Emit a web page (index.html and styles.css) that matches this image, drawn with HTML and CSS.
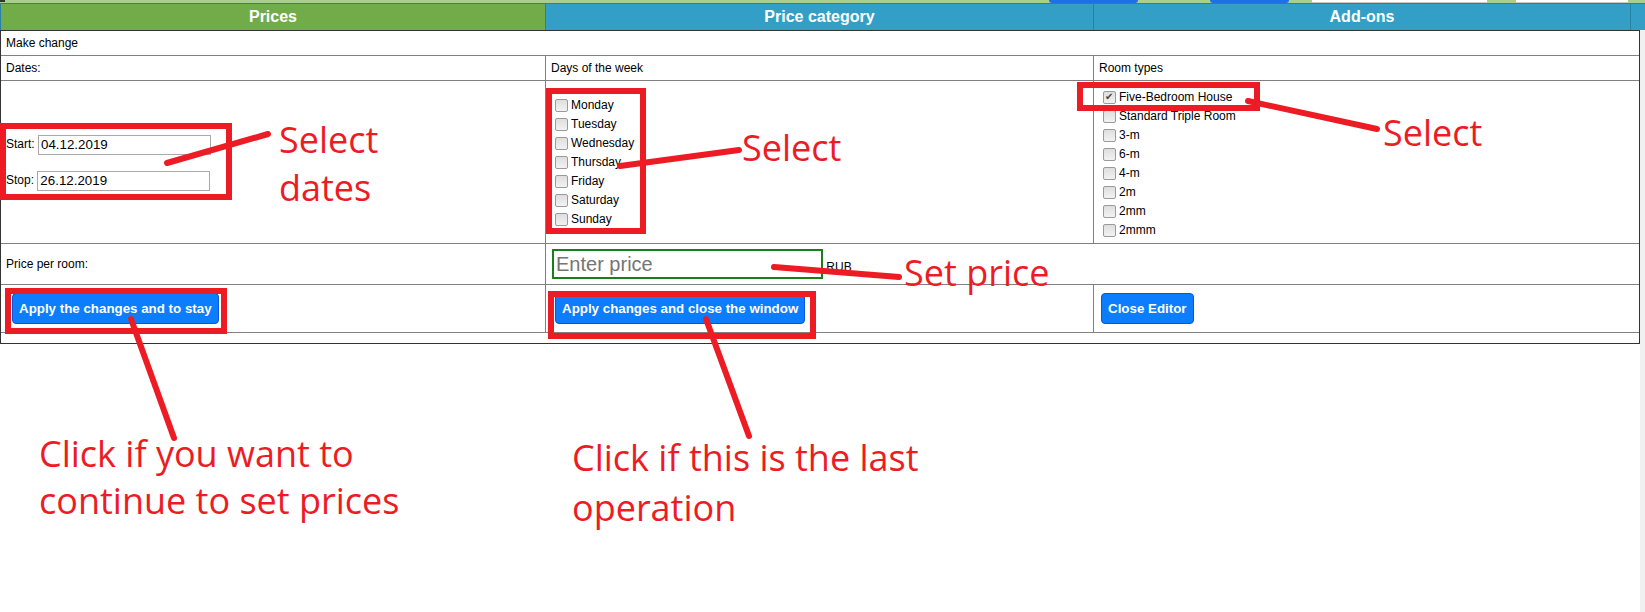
FILE: index.html
```html
<!DOCTYPE html>
<html lang="en">
<head>
<meta charset="utf-8">
<title>Price editor</title>
<link rel="stylesheet" href="styles.css">
</head>
<body>
<div class="page">
  <div class="topbar">
    <span class="tb-mark"></span>
    <span class="tb-btn tb-btn1"></span>
    <span class="tb-btn tb-btn2"></span>
    <span class="tb-field tb-field1"></span>
    <span class="tb-field tb-field2"></span>
  </div>
  <div class="tabs">
    <div class="tab tab-green">Prices</div>
    <div class="tab">Price category</div>
    <div class="tab">Add-ons</div>
    <div class="tab tab-end"></div>
  </div>
  <div class="body-row">
    <table class="editor">
      <colgroup><col class="c1"><col class="c2"><col class="c3"></colgroup>
      <tr class="r-head"><td colspan="3">Make change</td></tr>
      <tr class="r-label"><td>Dates:</td><td>Days of the week</td><td>Room types</td></tr>
      <tr class="r-main">
        <td>
          <div class="dates">
            <label class="date-row">Start: <input class="date" type="text" value="04.12.2019"></label>
            <label class="date-row">Stop: <input class="date" type="text" value="26.12.2019"></label>
          </div>
        </td>
        <td>
          <ul class="checks">
            <li><label><input class="cb" type="checkbox">Monday</label></li>
            <li><label><input class="cb" type="checkbox">Tuesday</label></li>
            <li><label><input class="cb" type="checkbox">Wednesday</label></li>
            <li><label><input class="cb" type="checkbox">Thursday</label></li>
            <li><label><input class="cb" type="checkbox">Friday</label></li>
            <li><label><input class="cb" type="checkbox">Saturday</label></li>
            <li><label><input class="cb" type="checkbox">Sunday</label></li>
          </ul>
        </td>
        <td>
          <ul class="checks checks-rooms">
            <li><label><input class="cb" type="checkbox" checked>Five-Bedroom House</label></li>
            <li><label><input class="cb" type="checkbox">Standard Triple Room</label></li>
            <li><label><input class="cb" type="checkbox">3-m</label></li>
            <li><label><input class="cb" type="checkbox">6-m</label></li>
            <li><label><input class="cb" type="checkbox">4-m</label></li>
            <li><label><input class="cb" type="checkbox">2m</label></li>
            <li><label><input class="cb" type="checkbox">2mm</label></li>
            <li><label><input class="cb" type="checkbox">2mmm</label></li>
          </ul>
        </td>
      </tr>
      <tr class="r-price">
        <td>Price per room:</td>
        <td colspan="2"><input class="price" type="text" placeholder="Enter price"> RUB</td>
      </tr>
      <tr class="r-actions">
        <td><button class="btn btn-stay">Apply the changes and to stay</button></td>
        <td><button class="btn btn-window">Apply changes and close the window</button></td>
        <td><button class="btn btn-editor">Close Editor</button></td>
      </tr>
      <tr class="r-foot"><td colspan="3"></td></tr>
    </table>
    <div class="gutter"></div>
  </div>

  <div class="annot">
    <svg class="annot-svg" width="1645" height="612" viewBox="0 0 1645 612">
      <g fill="none" stroke="#ed1c24" stroke-width="6">
        <rect x="3" y="126" width="226" height="71"/>
        <rect x="549" y="91" width="94" height="140"/>
        <rect x="1080" y="85" width="177" height="23"/>
        <rect x="8" y="291" width="216" height="40"/>
        <rect x="551" y="294" width="262" height="42"/>
      </g>
      <g stroke="#ed1c24" stroke-width="6" stroke-linecap="round">
        <line x1="167" y1="163" x2="268" y2="134"/>
        <line x1="620" y1="166" x2="739" y2="150"/>
        <line x1="1248" y1="101" x2="1377" y2="129"/>
        <line x1="774" y1="267" x2="899" y2="277"/>
        <line x1="131" y1="319" x2="174" y2="438"/>
        <line x1="706" y1="319" x2="749" y2="436"/>
      </g>
    </svg>
    <div class="note note-dates">Select<br>dates</div>
    <div class="note note-days">Select</div>
    <div class="note note-rooms">Select</div>
    <div class="note note-price">Set price</div>
    <div class="note note-stay">Click if you want to<br>continue to set prices</div>
    <div class="note note-last">Click if this is the last<br>operation</div>
  </div>
</div>
</body>
</html>
```
FILE: styles.css
```css
html, body {
  margin: 0;
  padding: 0;
  background: #fff;
}

.page {
  position: relative;
  width: 1645px;
  min-height: 612px;
  font-family: "Liberation Sans", Arial, sans-serif;
  color: #000;
}

/* top strip of the underlying page */
.topbar {
  display: flex;
  height: 3px;
  background: #a8d08c;
  overflow: hidden;
}
.tb-mark {
  width: 5px;
  height: 2px;
  background: #333;
}
.tb-btn {
  height: 3px;
  background: #1f6fe5;
  border-radius: 0 0 3px 3px;
}
.tb-btn1 { margin-left: 1044px; width: 89px; }
.tb-btn2 { margin-left: 72px; width: 79px; }
.tb-field {
  height: 2px;
  background: #fff;
  border-bottom: 1px solid #c8c8c8;
}
.tb-field1 { margin-left: 23px; width: 175px; }
.tb-field2 { margin-left: 29px; width: 112px; }

/* section header */
.tabs {
  display: grid;
  grid-template-columns: 545px 548px 537px 1fr;
  height: 27px;
}
.tab {
  background: #349fc6;
  color: #fff;
  font-weight: bold;
  font-size: 16px;
  line-height: 26px;
  text-align: center;
  border-top: 1px solid #2a7fa6;
  border-left: 1px solid #2a7fa6;
}
.tab-green {
  background: #72ac48;
}

/* body */
.body-row {
  display: flex;
  min-height: 582px;
}
.gutter {
  width: 5px;
  background: #f0f0f0;
}

.editor {
  box-sizing: border-box;
  width: 1640px;
  table-layout: fixed;
  border-collapse: separate;
  border-spacing: 0;
  border: 1px solid #333;
  align-self: flex-start;
  font-size: 12px;
}
.c1 { width: 544px; }
.c2 { width: 548px; }
.c3 { width: 546px; }

.editor td {
  box-sizing: border-box;
  padding: 0 5px;
  vertical-align: middle;
  border-bottom: 1px solid #808080;
  font-size: 12px;
}
.editor td + td {
  border-left: 1px solid #808080;
}
.r-head td, .r-label td { height: 25px; }
.r-main td { height: 163px; }
.r-price td { height: 41px; }
.r-actions td { height: 48px; }
.r-foot td { height: 10px; border-bottom: none; }

/* dates */
.dates {
  display: flex;
  flex-direction: column;
  gap: 16px;
}
.date-row {
  display: block;
  height: 20px;
  line-height: 20px;
}
.date {
  box-sizing: border-box;
  width: 173px;
  height: 20px;
  margin: 0;
  padding: 1px 2px;
  border: 1px solid #a9a9a9;
  font-family: "Liberation Sans", Arial, sans-serif;
  font-size: 13.333px;
  color: #000;
  vertical-align: middle;
}

/* checkbox lists */
.checks {
  list-style: none;
  margin: 0;
  padding: 0;
}
.checks-rooms {
  padding-top: 3px;
}
.checks li {
  height: 19px;
}
.checks label {
  display: flex;
  align-items: center;
  height: 19px;
}
.cb {
  appearance: none;
  -webkit-appearance: none;
  box-sizing: border-box;
  width: 13px;
  height: 13px;
  margin: 0 3px 0 4px;
  border: 1px solid #9a9a9a;
  border-radius: 2px;
  background: linear-gradient(#dedede, #f2f2f2);
  position: relative;
}
.cb:checked::after {
  content: "\2714";
  position: absolute;
  left: 1px;
  top: -1px;
  font-family: "DejaVu Sans", sans-serif;
  font-size: 10px;
  line-height: 12px;
  color: #444;
}

/* price */
.price {
  box-sizing: border-box;
  width: 271px;
  height: 30px;
  margin: 0 0 0 1px;
  padding: 0 2px;
  border: 2px solid #1a7e1a;
  font-family: "Liberation Sans", Arial, sans-serif;
  font-size: 20px;
  color: #000;
}
.price::placeholder {
  color: #757575;
}

/* buttons */
.btn {
  box-sizing: border-box;
  height: 31px;
  padding: 0 6px;
  border: 1px solid #0a56d8;
  border-radius: 4px;
  background: #0b7dfd;
  color: #fff;
  font-family: "Liberation Sans", Arial, sans-serif;
  font-weight: bold;
  font-size: 13.333px;
  line-height: 15px;
  vertical-align: middle;
}
.btn-stay { margin-left: 6px; }
.btn-window { margin-left: 4px; }
.btn-editor { margin-left: 2px; }

/* annotation layer drawn over the screenshot */
.annot {
  position: absolute;
  left: 0;
  top: 0;
  width: 1645px;
  height: 612px;
  pointer-events: none;
}
.annot-svg {
  position: absolute;
  left: 0;
  top: 0;
}
.note {
  position: absolute;
  font-family: "Open Sans", "Noto Sans", sans-serif;
  font-size: 36px;
  line-height: 48px;
  color: #ed1c24;
  white-space: nowrap;
}
.note-dates { left: 279px; top: 116px; }
.note-days { left: 742px; top: 124px; }
.note-rooms { left: 1383px; top: 109px; }
.note-price { left: 904px; top: 249px; }
.note-stay { left: 39px; top: 430px; line-height: 47px; }
.note-last { left: 572px; top: 433px; line-height: 50px; }
```
